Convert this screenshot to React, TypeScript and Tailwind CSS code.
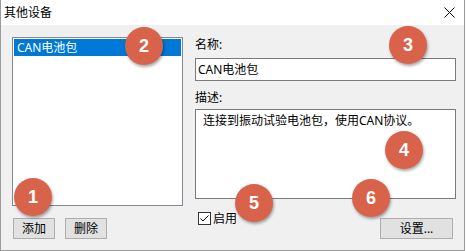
import React from 'react';

const font = { fontFamily: '"Noto Sans", "Noto Sans CJK SC", sans-serif' };

const Marker = ({ n, className }: { n: number; className: string }) => (
    <div
        className={`absolute w-[38px] h-[38px] rounded-full bg-[#d9634a] shadow-[1px_2px_3px_rgba(0,0,0,0.35)] flex items-center justify-center text-white text-[18px] font-bold ${className}`}
        style={{ fontFamily: '"Liberation Sans", Arial, sans-serif' }}
    >
        {n}
    </div>
);

const Button = ({ label, className }: { label: string; className: string }) => (
    <button
        type="button"
        className={`h-[21px] bg-[#e1e1e1] border border-[#adadad] text-[12px] text-black leading-none flex items-center justify-center ${className}`}
    >
        {label}
    </button>
);

export default function App() {
    return (
        <div className="relative w-[466px] h-[251px] bg-white text-black text-[12px]" style={font}>
            <div className="w-[465px] h-[251px] flex flex-col border-r border-b border-l border-[#9a9a9a]">
                {/* Title bar */}
                <div className="h-[25px] bg-white flex items-center justify-between pl-[3px] pr-[9px]">
                    <span className="text-[12px]">其他设备</span>
                    <svg width="11" height="11" viewBox="0 0 11 11">
                        <path d="M0.5 0.5 L10.5 10.5 M10.5 0.5 L0.5 10.5" stroke="#000" strokeWidth="1" />
                    </svg>
                </div>

                {/* Body */}
                <div className="flex-1 bg-[#f0f0f0] flex pl-[11px] pt-[12px] gap-[12px]">
                    {/* Left column */}
                    <div className="w-[171px] flex flex-col">
                        <div className="h-[169px] bg-white border border-[#828790] p-px">
                            <div className="h-[17px] bg-[#0078d7] text-white leading-[17px] pl-[3px]">CAN电池包</div>
                        </div>
                        <div className="flex gap-[10px] mt-[12px] ml-px">
                            <Button label="添加" className="w-[42px] h-[20px]" />
                            <Button label="删除" className="w-[42px] h-[20px]" />
                        </div>
                    </div>

                    {/* Right column */}
                    <div className="w-[261px] flex flex-col">
                        <div className="h-[17px] leading-[17px] -mt-px">名称:</div>
                        <div className="h-[23px] mt-[5px] bg-white border border-[#7a7a7a] leading-[21px] pl-[2px]">CAN电池包</div>
                        <div className="h-[17px] leading-[17px] mt-[8px]">描述:</div>
                        <div className="h-[90px] mt-[3px] bg-white border border-[#7a7a7a] pl-[7px] pt-[2px] leading-[17px]">
                            连接到振动试验电池包，使用CAN协议。
                        </div>
                        <div className="flex justify-between items-start">
                            <label className="flex items-center gap-[2px] mt-[12px] ml-[3px] leading-[15px]">
                                <span className="w-[13px] h-[13px] bg-white border border-[#333] flex items-center justify-center">
                                    <svg width="11" height="11" viewBox="0 0 11 11">
                                        <path d="M1.5 5.5 L4 8 L9.5 2.5" stroke="#000" strokeWidth="1" fill="none" />
                                    </svg>
                                </span>
                                启用
                            </label>
                            <Button label="设置..." className="w-[73px] mt-[19px] mr-[3px]" />
                        </div>
                    </div>
                </div>
            </div>

            <Marker n={1} className="left-[14px] top-[178px]" />
            <Marker n={2} className="left-[125px] top-[27px]" />
            <Marker n={3} className="left-[389px] top-[26px]" />
            <Marker n={4} className="left-[385px] top-[131px]" />
            <Marker n={5} className="left-[235px] top-[184px]" />
            <Marker n={6} className="left-[352px] top-[179px]" />
        </div>
    );
}
